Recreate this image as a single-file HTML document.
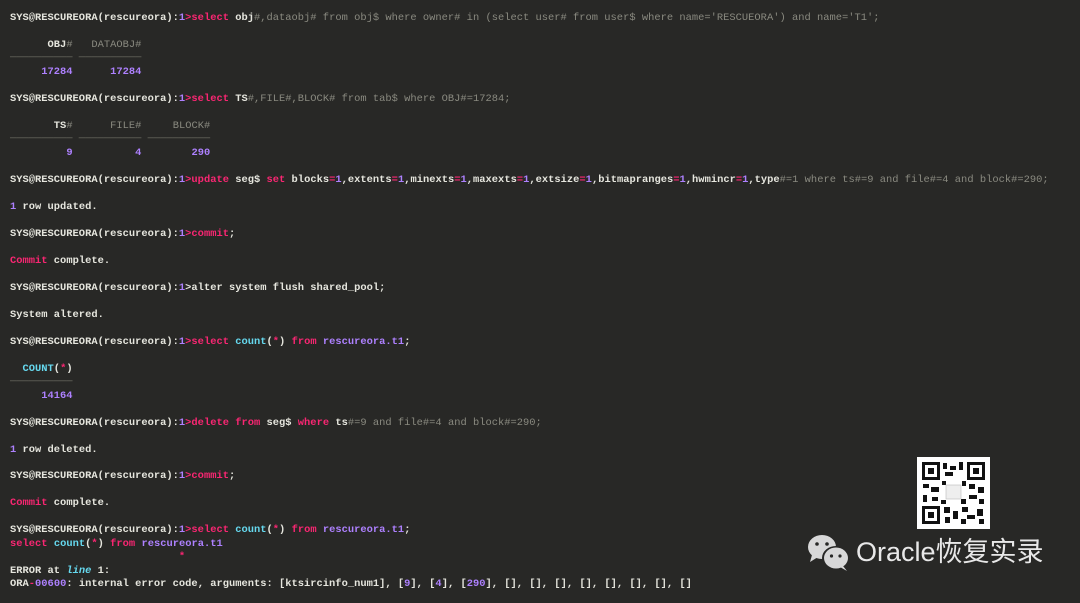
<!DOCTYPE html>
<html><head><meta charset="utf-8"><style>
html,body{margin:0;padding:0;background:#282826;width:1080px;height:603px;overflow:hidden}
pre{position:absolute;left:10px;top:12px;margin:0;font-family:"Liberation Mono",monospace;font-size:10.4px;line-height:13.48px;color:#e6e6de;letter-spacing:0.02px;font-weight:bold}
.p{color:#f92672}.v{color:#ae81ff}.g{color:#8a8a80;font-weight:normal}.c{color:#66d9ef}.d{color:#6a6a60;font-weight:normal}
.i{color:#66d9ef;font-style:italic}
.qr{position:absolute;left:917px;top:457px;width:73px;height:72px;background:#fff}
.brand{position:absolute;left:856px;top:534px;font-family:"Liberation Sans","Noto Sans CJK SC",sans-serif;font-size:27px;color:#e8e8e8;line-height:36px}
</style></head><body>
<pre>SYS@RESCUREORA(rescureora):<span class="v">1</span><span class="p">&gt;select</span> obj<span class="g">#,dataobj# from obj$ where owner# in (select user# from user$ where name='RESCUEORA') and name='T1';</span>

      OBJ<span class="g">#</span>   <span class="g">DATAOBJ#</span>
<span class="d">────────── ──────────</span>
     <span class="v">17284</span>      <span class="v">17284</span>

SYS@RESCUREORA(rescureora):<span class="v">1</span><span class="p">&gt;select</span> TS<span class="g">#,FILE#,BLOCK# from tab$ where OBJ#=17284;</span>

       TS<span class="g">#</span>      <span class="g">FILE#</span>     <span class="g">BLOCK#</span>
<span class="d">────────── ────────── ──────────</span>
         <span class="v">9</span>          <span class="v">4</span>        <span class="v">290</span>

SYS@RESCUREORA(rescureora):<span class="v">1</span><span class="p">&gt;update</span> seg$ <span class="p">set</span> blocks<span class="p">=</span><span class="v">1</span>,extents<span class="p">=</span><span class="v">1</span>,minexts<span class="p">=</span><span class="v">1</span>,maxexts<span class="p">=</span><span class="v">1</span>,extsize<span class="p">=</span><span class="v">1</span>,bitmapranges<span class="p">=</span><span class="v">1</span>,hwmincr<span class="p">=</span><span class="v">1</span>,type<span class="g">#=1 where ts#=9 and file#=4 and block#=290;</span>

<span class="v">1</span> row updated.

SYS@RESCUREORA(rescureora):<span class="v">1</span><span class="p">&gt;commit</span>;

<span class="p">Commit</span> complete.

SYS@RESCUREORA(rescureora):<span class="v">1</span>&gt;alter system flush shared_pool;

System altered.

SYS@RESCUREORA(rescureora):<span class="v">1</span><span class="p">&gt;select</span> <span class="c">count</span>(<span class="p">*</span>) <span class="p">from</span> <span class="v">rescureora.t1</span>;

  <span class="c">COUNT</span>(<span class="p">*</span>)
<span class="d">──────────</span>
     <span class="v">14164</span>

SYS@RESCUREORA(rescureora):<span class="v">1</span><span class="p">&gt;delete from</span> seg$ <span class="p">where</span> ts<span class="g">#=9 and file#=4 and block#=290;</span>

<span class="v">1</span> row deleted.

SYS@RESCUREORA(rescureora):<span class="v">1</span><span class="p">&gt;commit</span>;

<span class="p">Commit</span> complete.

SYS@RESCUREORA(rescureora):<span class="v">1</span><span class="p">&gt;select</span> <span class="c">count</span>(<span class="p">*</span>) <span class="p">from</span> <span class="v">rescureora.t1</span>;
<span class="p">select</span> <span class="c">count</span>(<span class="p">*</span>) <span class="p">from</span> <span class="v">rescureora.t1</span>
                           <span class="p">*</span>
ERROR at <span class="i">line</span> 1:
ORA<span class="p">-</span><span class="v">00600</span>: internal error code, arguments: [ktsircinfo_num1], [<span class="v">9</span>], [<span class="v">4</span>], [<span class="v">290</span>], [], [], [], [], [], [], [], []</pre>
<div class="qr"><svg width="73" height="72" viewBox="0 0 73 72">
<g fill="#111"><rect x="5" y="5" width="18" height="18"/><rect x="50" y="5" width="18" height="18"/><rect x="5" y="49" width="18" height="18"/></g>
<g fill="#fff"><rect x="8" y="8" width="12" height="12"/><rect x="53" y="8" width="12" height="12"/><rect x="8" y="52" width="12" height="12"/></g>
<g fill="#111"><rect x="11" y="11" width="6" height="6"/><rect x="56" y="11" width="6" height="6"/><rect x="11" y="55" width="6" height="6"/>
<rect x="26" y="6" width="4" height="6"/><rect x="33" y="9" width="6" height="4"/><rect x="42" y="5" width="4" height="8"/><rect x="28" y="15" width="8" height="4"/>
<rect x="6" y="27" width="6" height="4"/><rect x="14" y="30" width="8" height="5"/><rect x="6" y="38" width="4" height="7"/><rect x="15" y="40" width="6" height="4"/>
<rect x="52" y="27" width="6" height="5"/><rect x="61" y="30" width="6" height="6"/><rect x="52" y="38" width="8" height="4"/><rect x="62" y="42" width="5" height="5"/>
<rect x="27" y="50" width="6" height="6"/><rect x="36" y="54" width="5" height="8"/><rect x="45" y="50" width="6" height="5"/><rect x="50" y="58" width="8" height="4"/><rect x="60" y="52" width="6" height="7"/><rect x="28" y="60" width="5" height="6"/><rect x="44" y="62" width="5" height="5"/><rect x="62" y="62" width="5" height="5"/>
<rect x="25" y="24" width="4" height="4"/><rect x="45" y="24" width="4" height="5"/><rect x="24" y="43" width="5" height="4"/><rect x="44" y="42" width="5" height="5"/></g>
<rect x="29" y="28" width="15" height="14" fill="#eee" stroke="#bbb" stroke-width="0.6"/>
</svg></div>
<svg style="position:absolute;left:806px;top:533px" width="46" height="40" viewBox="0 0 46 40">
<ellipse cx="16" cy="14" rx="14" ry="12" fill="#d8d8d8"/><path d="M6 22 L4 29 L12 24Z" fill="#d8d8d8"/>
<circle cx="11" cy="11" r="1.8" fill="#282826"/><circle cx="21" cy="11" r="1.8" fill="#282826"/>
<ellipse cx="30" cy="25" rx="14" ry="12" fill="#282826"/>
<ellipse cx="30" cy="25" rx="12" ry="10.5" fill="#d8d8d8"/><path d="M37 33 L41 38 L34 34Z" fill="#d8d8d8"/>
<circle cx="25.5" cy="23" r="1.6" fill="#282826"/><circle cx="34" cy="23" r="1.6" fill="#282826"/>
</svg>
<div class="brand">Oracle恢复实录</div>
</body></html>
